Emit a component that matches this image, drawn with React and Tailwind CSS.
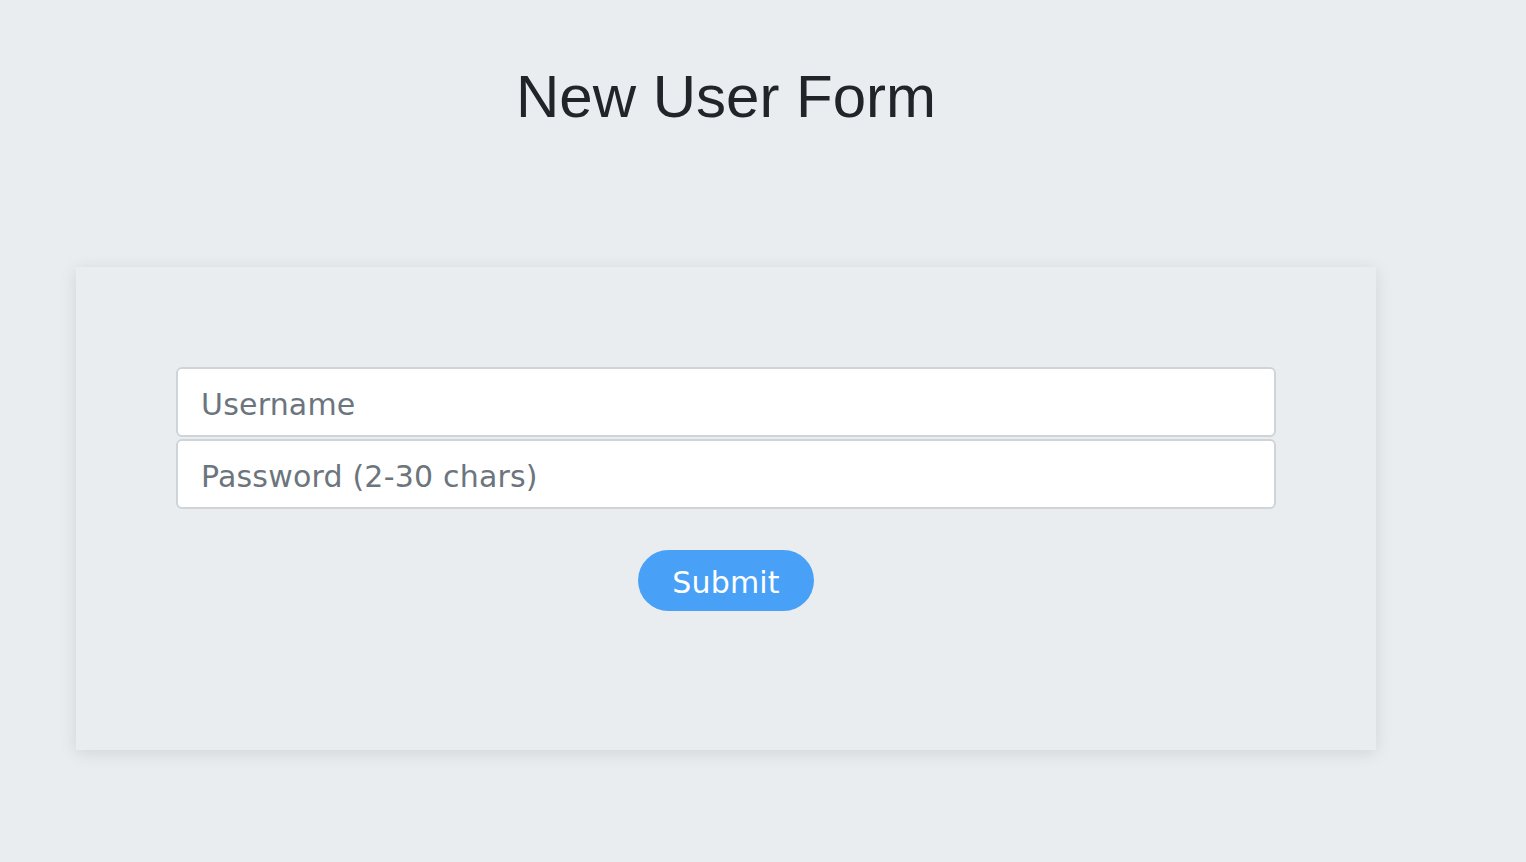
export default function App() {
  return (
    <div className="min-h-[862px] w-full bg-[#e9edf0]">
      <div className="ml-[76px] w-[1300px] pt-[67px]">
        <h1
          className="text-center text-[60px] leading-[60px] text-[#212529]"
          style={{ fontFamily: '"Liberation Sans", Arial, sans-serif' }}
        >
          New User Form
        </h1>
        <div
          className="mt-[140px] h-[483px] bg-[#e9edf0] px-[100px] pt-[100px] shadow-[0_3px_16px_rgba(0,0,0,0.1)]"
          style={{ fontFamily: '"DejaVu Sans", Verdana, sans-serif' }}
        >
          <div className="flex flex-col gap-[2px]">
            <input
              type="text"
              placeholder="Username"
              className="h-[70px] w-full rounded-[6px] border-2 border-[#cfd4d9] bg-white px-[23px] pt-[4px] text-[30px] tracking-[0.2px] text-[#495057] outline-none placeholder:text-[#6c757d]"
            />
            <input
              type="password"
              placeholder="Password (2-30 chars)"
              className="h-[70px] w-full rounded-[6px] border-2 border-[#cfd4d9] bg-white px-[23px] pt-[4px] text-[30px] tracking-[0.2px] text-[#495057] outline-none placeholder:text-[#6c757d]"
            />
          </div>
          <div className="mt-[41px] flex justify-center">
            <button className="h-[61px] w-[176px] rounded-full bg-[#48a0f7] pt-[3px] text-[30px] tracking-[0.2px] text-white">
              Submit
            </button>
          </div>
        </div>
      </div>
    </div>
  );
}
